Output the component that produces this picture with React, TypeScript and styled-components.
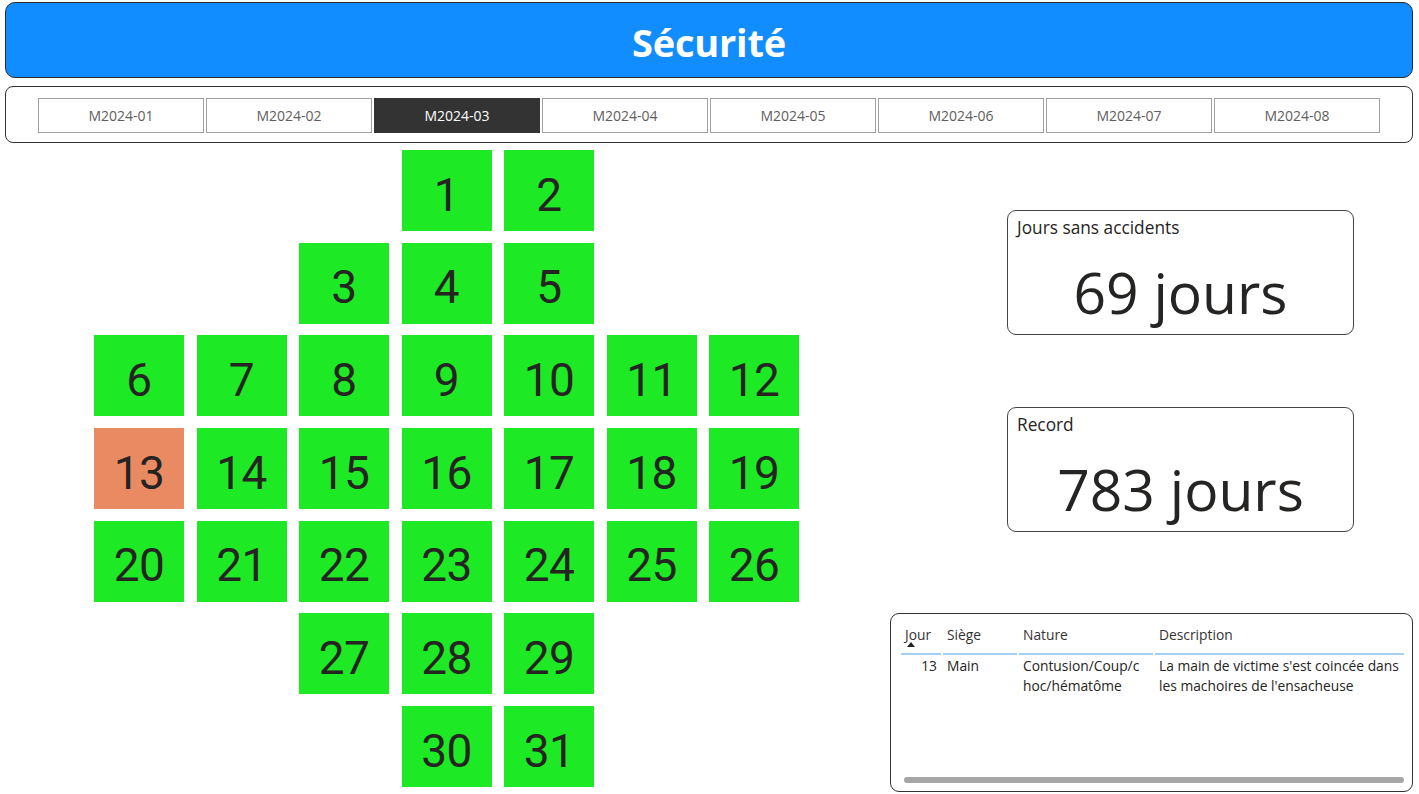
import React from "react";
import styled, { createGlobalStyle } from "styled-components";

const GlobalStyle = createGlobalStyle`
  html, body {
    margin: 0;
    padding: 0;
    background: #ffffff;
  }
  body {
    font-family: "Open Sans", "Noto Sans", sans-serif;
    color: #252423;
  }
`;

const months = ["M2024-01", "M2024-02", "M2024-03", "M2024-04", "M2024-05", "M2024-06", "M2024-07", "M2024-08"];

// columns used on each row of the calendar shape
const layout: number[][] = [
    [3, 4],
    [2, 3, 4],
    [0, 1, 2, 3, 4, 5, 6],
    [0, 1, 2, 3, 4, 5, 6],
    [0, 1, 2, 3, 4, 5, 6],
    [2, 3, 4],
    [3, 4],
];

const accidentDays = [13];

const days: { day: number; row: number; col: number }[] = [];
let counter = 1;
layout.forEach((cols, row) => {
    cols.forEach((col) => {
        days.push({ day: counter, row, col });
        counter++;
    });
});

export default function App() {
    return (
        <>
            <GlobalStyle />
            <Page>
                <Header>
                    <Title>Sécurité</Title>
                </Header>
                <TabBar>
                    {months.map((m) => (
                        <Tab key={m} active={m === "M2024-03"}>
                            {m}
                        </Tab>
                    ))}
                </TabBar>
                <Main>
                    <Calendar>
                        {days.map(({ day, row, col }) => (
                            <Tile key={day} row={row} col={col} accident={accidentDays.includes(day)}>
                                {day}
                            </Tile>
                        ))}
                    </Calendar>
                    <Side>
                        <KpiCard>
                            <KpiLabel>Jours sans accidents</KpiLabel>
                            <KpiValue>69 jours</KpiValue>
                        </KpiCard>
                        <KpiCard second>
                            <KpiLabel>Record</KpiLabel>
                            <KpiValue>783 jours</KpiValue>
                        </KpiCard>
                        <TableCard>
                            <Table>
                                <colgroup>
                                    <col style={{ width: 40 }} />
                                    <col style={{ width: 74 }} />
                                    <col style={{ width: 134 }} />
                                    <col />
                                </colgroup>
                                <thead>
                                    <tr>
                                        <Th>
                                            Jour
                                            <SortArrow />
                                        </Th>
                                        <Th>Siège</Th>
                                        <Th>Nature</Th>
                                        <Th>Description</Th>
                                    </tr>
                                </thead>
                                <tbody>
                                    <tr>
                                        <Td align="right">13</Td>
                                        <Td>Main</Td>
                                        <Td breakAll>Contusion/Coup/choc/hématôme</Td>
                                        <Td>La main de victime s'est coincée dans les machoires de l'ensacheuse</Td>
                                    </tr>
                                </tbody>
                            </Table>
                            <Scrollbar />
                        </TableCard>
                    </Side>
                </Main>
            </Page>
        </>
    );
}

const Page = styled.div`
  width: 1419px;
  height: 794px;
  box-sizing: border-box;
  padding: 2px 6px 0 5px;
  display: flex;
  flex-direction: column;
  overflow: hidden;
`;

const Header = styled.header`
  height: 76px;
  box-sizing: border-box;
  background: #118dff;
  border: 1px solid #2b2b2b;
  border-radius: 10px;
  display: flex;
  align-items: center;
  justify-content: center;
`;

const Title = styled.h1`
  margin: 0;
  padding-top: 3px;
  font-family: "Open Sans", "Noto Sans", sans-serif;
  font-weight: 700;
  font-size: 38px;
  color: #ffffff;
  letter-spacing: -0.2px;
`;

const TabBar = styled.nav`
  margin-top: 8px;
  height: 57px;
  box-sizing: border-box;
  border: 1.5px solid #333333;
  border-radius: 8px;
  padding: 11px 0 0 32px;
  display: flex;
  gap: 2px;
`;

const Tab = styled.div<{ active?: boolean }>`
  width: 166px;
  height: 35px;
  box-sizing: border-box;
  border: 1.5px solid ${({ active }) => (active ? "#333333" : "#a0a0a0")};
  background: ${({ active }) => (active ? "#333333" : "#ffffff")};
  color: ${({ active }) => (active ? "#ffffff" : "#605e5c")};
  font-size: 14px;
  display: flex;
  align-items: center;
  justify-content: center;
`;

const Main = styled.main`
  flex: 1;
  display: flex;
  justify-content: space-between;
`;

const Calendar = styled.div`
  margin: 7px 0 0 89px;
  display: grid;
  grid-template-columns: repeat(7, 90px);
  grid-template-rows: repeat(7, 81px);
  column-gap: 12.5px;
  row-gap: 11.7px;
  align-self: flex-start;
`;

const Tile = styled.div<{ row: number; col: number; accident?: boolean }>`
  grid-row: ${({ row }) => row + 1};
  grid-column: ${({ col }) => col + 1};
  background: ${({ accident }) => (accident ? "#ea8a63" : "#1ee925")};
  display: flex;
  align-items: center;
  justify-content: center;
  padding-top: 8px;
  box-sizing: border-box;
  font-family: Roboto, "DejaVu Sans", sans-serif;
  font-size: 46px;
  letter-spacing: -0.5px;
  color: #252423;
`;

const Side = styled.aside`
  width: 523px;
  display: flex;
  flex-direction: column;
  align-items: flex-end;
`;

const KpiCard = styled.section<{ second?: boolean }>`
  margin-top: ${({ second }) => (second ? "72px" : "67px")};
  margin-right: 59px;
  width: 347px;
  height: 125px;
  box-sizing: border-box;
  border: 1.5px solid #444444;
  border-radius: 9px;
  padding: 5px 9px 0 9px;
  display: flex;
  flex-direction: column;
`;

const KpiLabel = styled.div`
  font-size: 17.3px;
  color: #252423;
  line-height: 23px;
`;

const KpiValue = styled.div`
  text-align: center;
  font-size: 57px;
  line-height: 70px;
  margin-top: 18px;
  color: #252423;
`;

const TableCard = styled.section`
  margin-top: 81px;
  width: 523px;
  height: 179px;
  box-sizing: border-box;
  border: 1.5px solid #333333;
  border-radius: 9px;
  padding: 11px 6px 0 8px;
  display: flex;
  flex-direction: column;
`;

const Table = styled.table`
  table-layout: fixed;
  border-collapse: separate;
  border-spacing: 2px 0;
  width: 100%;
  font-size: 13.8px;
  line-height: 20px;
`;

const Th = styled.th`
  position: relative;
  text-align: left;
  font-weight: 400;
  color: #333333;
  padding: 0 4px 8px 4px;
  border-bottom: 2px solid #a3cff2;
  vertical-align: top;
  white-space: nowrap;
`;

const SortArrow = styled.span`
  position: absolute;
  left: 6px;
  top: 17px;
  width: 0;
  height: 0;
  border-left: 4px solid transparent;
  border-right: 4px solid transparent;
  border-bottom: 5px solid #222222;
`;

const Td = styled.td<{ align?: string; breakAll?: boolean }>`
  text-align: ${({ align }) => align || "left"};
  vertical-align: top;
  padding: 1px ${({ breakAll }) => (breakAll ? "8px" : "0")} 0 4px;
  color: #252423;
  word-break: ${({ breakAll }) => (breakAll ? "break-all" : "normal")};

  &:first-child {
    padding-right: 4px;
  }
`;

const Scrollbar = styled.div`
  margin: auto 0 8px 5px;
  height: 6px;
  width: 500px;
  border-radius: 3px;
  background: #a6a6a6;
`;
